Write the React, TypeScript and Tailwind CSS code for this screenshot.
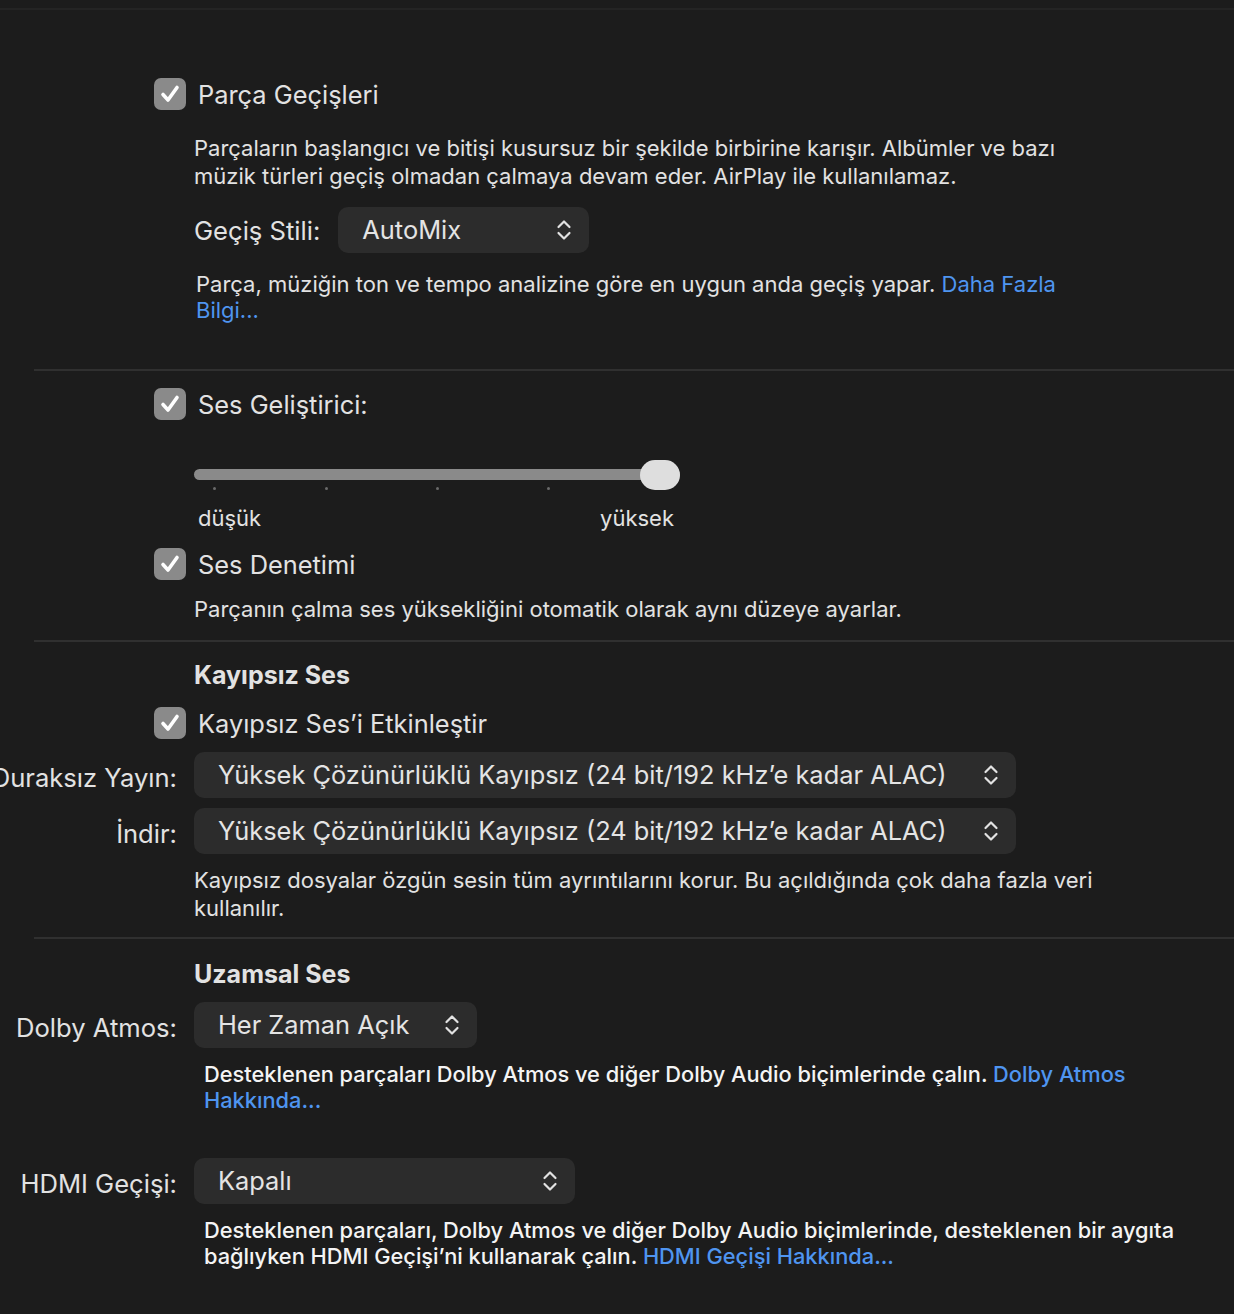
import React from "react";

const font = { fontFamily: "Inter, 'Noto Sans', sans-serif" };

function Check() {
  return (
    <div className="w-8 h-8 rounded-[7px] bg-[#8a8a8a] flex items-center justify-center shrink-0">
      <svg width="22" height="22" viewBox="0 0 22 22" fill="none">
        <path d="M4 11.5 L9 17 L18 4.5" stroke="#ffffff" strokeWidth="3.6" strokeLinecap="round" strokeLinejoin="round" />
      </svg>
    </div>
  );
}

function Chevrons() {
  return (
    <svg width="16" height="24" viewBox="0 0 16 24" fill="none" className="shrink-0">
      <path d="M2.5 9 L8 3.5 L13.5 9" stroke="#e2e2e2" strokeWidth="2.2" strokeLinecap="round" strokeLinejoin="round" />
      <path d="M2.5 15 L8 20.5 L13.5 15" stroke="#e2e2e2" strokeWidth="2.2" strokeLinecap="round" strokeLinejoin="round" />
    </svg>
  );
}

function Select({ value, width }: { value: string; width: string }) {
  return (
    <div className={`h-[46px] ${width} rounded-[10px] bg-[#2c2c2c] flex items-center justify-between pl-6 pr-[17px]`}>
      <span className="text-[25.4px] text-[#e4e4e4] whitespace-nowrap">{value}</span>
      <Chevrons />
    </div>
  );
}

function CheckRow({ label, className = "" }: { label: string; className?: string }) {
  return (
    <div className={`flex items-center gap-3 -ml-10 h-8 ${className}`}>
      <Check />
      <span className="pt-[3px] text-[25.4px] text-[#e2e2e2] whitespace-nowrap">{label}</span>
    </div>
  );
}

function Divider({ className = "" }: { className?: string }) {
  return <div className={`ml-[34px] h-[2px] bg-[#303030] ${className}`} />;
}

function FormRow({ label, children, className = "" }: { label: string; children: React.ReactNode; className?: string }) {
  return (
    <div className={`flex items-center ${className}`}>
      <div className="w-[177px] shrink-0 flex justify-end pt-[6px]">
        <span className="text-[25.6px] text-[#e2e2e2] whitespace-nowrap">{label}</span>
      </div>
      <div className="ml-[17px]">{children}</div>
    </div>
  );
}

export default function App() {
  const link = "text-[#4f95f0]";
  const desc = "text-[22px] text-[#e2e2e2]";
  const descBright = "text-[21.8px] text-[#f4f4f4] font-medium";
  return (
    <div className="w-[1234px] h-[1314px] bg-[#1c1c1c] overflow-hidden" style={font}>
      <div className="h-2" />
      <div className="h-[2px] bg-[#242424]" />

      {/* Section 1 */}
      <div className="pl-[194px] pt-[68px]">
        <CheckRow label="Parça Geçişleri" />
        <p className={`mt-[24px] leading-[28px] w-[960px] ${desc}`}>
          Parçaların başlangıcı ve bitişi kusursuz bir şekilde birbirine karışır. Albümler ve bazı
          <br />
          müzik türleri geçiş olmadan çalmaya devam eder. AirPlay ile kullanılamaz.
        </p>
        <div className="mt-[17px] flex items-center gap-[18px]">
          <span className="pt-[3px] text-[25.6px] text-[#e2e2e2]">Geçiş Stili:</span>
          <Select value="AutoMix" width="w-[251px]" />
        </div>
        <p className={`mt-[18px] ml-[2px] leading-[26px] w-[960px] ${desc}`}>
          Parça, müziğin ton ve tempo analizine göre en uygun anda geçiş yapar. <span className={link}>Daha Fazla</span>
          <br />
          <span className={link}>Bilgi...</span>
        </p>
      </div>

      <Divider className="mt-[46px]" />

      {/* Section 2 */}
      <div className="pl-[194px] pt-[17px]">
        <CheckRow label="Ses Geliştirici:" />
        <div className="mt-10 w-[486px] relative h-[30px]">
          <div className="absolute left-0 right-0 top-[9px] h-[11px] rounded-full bg-[#8a8a8a]" />
          <div className="absolute top-[27px] left-[19px] w-[3px] h-[3px] rounded-full bg-[#6a6a6a]" />
          <div className="absolute top-[27px] left-[131px] w-[3px] h-[3px] rounded-full bg-[#6a6a6a]" />
          <div className="absolute top-[27px] left-[242px] w-[3px] h-[3px] rounded-full bg-[#6a6a6a]" />
          <div className="absolute top-[27px] left-[353px] w-[3px] h-[3px] rounded-full bg-[#6a6a6a]" />
          <div className="absolute right-0 top-0 w-10 h-[30px] rounded-full bg-[#dedede]" />
        </div>
        <div className={`mt-[14px] w-[480px] flex justify-between leading-[28px] ${desc}`}>
          <span className="ml-1">düşük</span>
          <span>yüksek</span>
        </div>
        <CheckRow label="Ses Denetimi" className="mt-[16px]" />
        <p className={`mt-[15px] leading-[28px] ${desc}`}>
          Parçanın çalma ses yüksekliğini otomatik olarak aynı düzeye ayarlar.
        </p>
      </div>

      <Divider className="mt-[17px]" />

      {/* Section 3 */}
      <div className="pt-[19px]">
        <div className="pl-[194px]">
          <h3 className="text-[25px] leading-[28px] font-bold text-[#e2e2e2]">Kayıpsız Ses</h3>
          <CheckRow label="Kayıpsız Ses’i Etkinleştir" className="mt-[18px]" />
        </div>
        <FormRow label="Duraksız Yayın:" className="mt-[13px]">
          <Select value="Yüksek Çözünürlüklü Kayıpsız (24 bit/192 kHz’e kadar ALAC)" width="w-[822px]" />
        </FormRow>
        <FormRow label="İndir:" className="mt-[10px]">
          <Select value="Yüksek Çözünürlüklü Kayıpsız (24 bit/192 kHz’e kadar ALAC)" width="w-[822px]" />
        </FormRow>
        <p className={`pl-[194px] mt-[12px] leading-[28px] ${desc}`}>
          Kayıpsız dosyalar özgün sesin tüm ayrıntılarını korur. Bu açıldığında çok daha fazla veri
          <br />
          kullanılır.
        </p>
      </div>

      <Divider className="mt-[15px]" />

      {/* Section 4 */}
      <div className="pt-[21px]">
        <h3 className="pl-[194px] text-[25px] leading-[28px] font-bold text-[#e2e2e2]">Uzamsal Ses</h3>
        <FormRow label="Dolby Atmos:" className="mt-[14px]">
          <Select value="Her Zaman Açık" width="w-[283px]" />
        </FormRow>
        <p className={`pl-[204px] mt-[13px] leading-[26px] ${descBright}`}>
          Desteklenen parçaları Dolby Atmos ve diğer Dolby Audio biçimlerinde çalın. <span className={link}>Dolby Atmos</span>
          <br />
          <span className={link}>Hakkında...</span>
        </p>
        <FormRow label="HDMI Geçişi:" className="mt-[45px]">
          <Select value="Kapalı" width="w-[381px]" />
        </FormRow>
        <p className={`pl-[204px] mt-[13px] leading-[26px] ${descBright}`}>
          Desteklenen parçaları, Dolby Atmos ve diğer Dolby Audio biçimlerinde, desteklenen bir aygıta
          <br />
          bağlıyken HDMI Geçişi’ni kullanarak çalın. <span className={link}>HDMI Geçişi Hakkında...</span>
        </p>
      </div>
    </div>
  );
}
